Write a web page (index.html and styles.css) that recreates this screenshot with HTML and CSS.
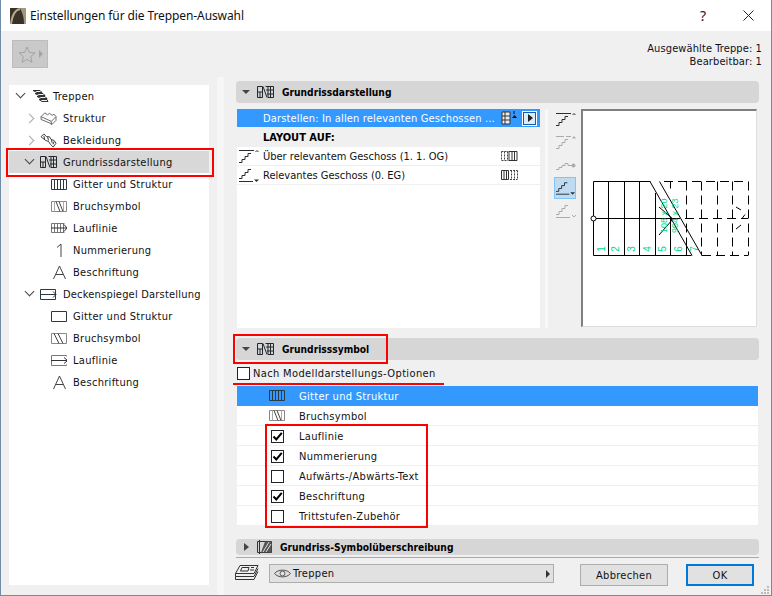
FILE: index.html
```html
<!DOCTYPE html>
<html lang="de">
<head>
<meta charset="utf-8">
<title>Einstellungen für die Treppen-Auswahl</title>
<link rel="stylesheet" href="styles.css">
</head>
<body>
<svg class="defs" width="0" height="0">
  <symbol id="i-plan" viewBox="0 0 17 12"><path d="M.5.500h5v11h-5zM.5 6h5M3 6v5.500M6 .5l4 11M8.500.500h8v11H11M11 .5v11M13.500.5v11M9 4h7.500M10 8h6.500" fill="none" stroke="#23282c" stroke-width="1"/></symbol>
  <symbol id="i-grid" viewBox="0 0 17 12"><path d="M.5 .5h15v10H.5zM3.500 .5v10M6.500 .5v10M9.500 .5v10M12.500 .5v10" fill="none" stroke="#2b3a42" stroke-width="1"/></symbol>
  <symbol id="i-break" viewBox="0 0 17 12"><path d="M.5 .5h15v10H.5z" fill="none" stroke="#888"/><path d="M3.500 .5v10M12.500 .5v10" stroke="#aaa"/><path d="M5 .5l4 10M8 .5l4 10" stroke="#444" fill="none"/></symbol>
  <symbol id="i-walk" viewBox="0 0 17 12"><path d="M.5 1.500h13M.5 10.500h13M.5 1.500v9M3.500 1.500v9M6.500 1.500v9M9.500 1.500v9M12.500 1.500v9" fill="none" stroke="#777"/><path d="M0 6h16M13 2.500l3 3.500-3 3.500" fill="none" stroke="#333"/></symbol>
  <symbol id="i-num" viewBox="0 0 17 14"><path d="M6 4.500l4-3.500v13" fill="none" stroke="#444"/></symbol>
  <symbol id="i-a" viewBox="0 0 17 14"><path d="M2.500 14L8.500 1l6 13M5 9.500h7" fill="none" stroke="#444"/></symbol>
  <symbol id="i-ceil" viewBox="0 0 18 12"><path d="M.5 .5h15v10H.5z" fill="none" stroke="#2b3a42"/><path d="M.5 5.500h15.500M13 2.500l3 3-3 3" fill="none" stroke="#2b3a42"/></symbol>
  <symbol id="i-rect" viewBox="0 0 17 12"><path d="M.5 .5h15v10H.5z" fill="none" stroke="#2b3a42"/></symbol>
  <symbol id="i-break2" viewBox="0 0 17 12"><path d="M.5 .5h15v10H.5z" fill="none" stroke="#888"/><path d="M3 .5l5 10M7 .5l5 10" stroke="#444" fill="none"/></symbol>
  <symbol id="i-walk2" viewBox="0 0 17 12"><path d="M15.500 1.500V.5H.5v10h15V9.500" fill="none" stroke="#777"/><path d="M0 5.500h16M13 2.500l3.500 3-3.500 3" fill="none" stroke="#333"/></symbol>
  <symbol id="s-top" viewBox="0 0 21 14"><path d="M1 1.500h15" stroke="currentColor" fill="none"/><path d="M17.500 3l1.500-1.500L20.500 3" stroke="currentColor" fill="none"/><path d="M1 13.500h3v-3h3v-3h3v-3h3" stroke="currentColor" fill="none"/></symbol>
  <symbol id="s-mid" viewBox="0 0 21 14"><path d="M1 1.500h8M11 1.500h5" stroke="currentColor" fill="none"/><path d="M17 3.500h4L19 1z" fill="currentColor"/><path d="M1 13.500h3v-3h3v-3h3v-3h3" stroke="currentColor" fill="none"/></symbol>
  <symbol id="s-dot" viewBox="0 0 21 14"><path d="M1 11.500h3v-2h3v-2h3v-2h3v2h5" stroke="currentColor" fill="none"/><circle cx="18.500" cy="7.500" r="2" fill="currentColor"/></symbol>
  <symbol id="s-cur" viewBox="0 0 21 14"><path d="M1 10.500h3v-3h3v-3h3v-3h3M1 13.500h14" stroke="currentColor" fill="none"/><path d="M16 11.500h5L18.500 14z" fill="currentColor"/></symbol>
  <symbol id="s-low" viewBox="0 0 21 14"><path d="M1 10.500h3v-3h3v-3h3v-3h3M1 13.500h14M17 11l2 2 2-2" stroke="currentColor" fill="none"/></symbol>
  <symbol id="i-check" viewBox="0 0 11 11"><path d="M1.500 5.500l2.800 3L9.800 1.800" fill="none" stroke="#000" stroke-width="2"/></symbol>
</svg>

<div class="window">
  <header class="titlebar">
    <svg class="app-icon" width="16" height="16" viewBox="0 0 16 16"><rect width="16" height="16" fill="#3a3226"/><path d="M10 0h6v16h-2c0-6-1-10-4-16z" fill="#a3967c"/><path d="M1 16C2 8 5 2 10 1" fill="none" stroke="#b5a88f" stroke-width="2"/></svg>
    <span class="title">Einstellungen für die Treppen-Auswahl</span>
    <span class="help">?</span>
    <svg class="close" width="11" height="11" viewBox="0 0 11 11"><path d="M.5.500l10 10M10.500.500l-10 10" stroke="#222" fill="none"/></svg>
  </header>

  <div class="toolbar">
    <div class="fav">
      <svg width="18" height="17" viewBox="0 0 18 17"><path d="M9 1l2.300 5.400 5.700.5-4.300 3.800 1.300 5.700L9 13.400l-5 3 1.300-5.700L1 6.900l5.700-.5z" fill="none" stroke="#a3a3a3"/></svg>
      <span class="fav-arrow"></span>
    </div>
    <div class="info">Ausgewählte Treppe: 1<br>Bearbeitbar: 1</div>
  </div>

  <div class="content">
    <nav class="tree">
      <div class="node l0"><span class="chev open"></span><svg class="ti" width="17" height="14" viewBox="0 0 17 14"><path d="M1 1.500h7l2 2H5zM3 4.500h8l2 2H7zM5 7.500h8l2 2H9zM7 10.500h8l1 2h-6z" fill="#f2f2f2" stroke="#333"/></svg><span>Treppen</span></div>
      <div class="node l1"><span class="chev"></span><svg class="ti wide" width="17" height="15" viewBox="0 0 18 16"><path d="M1 6l4-4 3 2 2-1.500 3 2 2-1 2 2.500v4l-4 4-12-5zM1 6l11 5 5-5M12 11v4" fill="#fafafa" stroke="#666" stroke-linejoin="round"/></svg><span>Struktur</span></div>
      <div class="node l1"><span class="chev"></span><svg class="ti wide" width="17" height="15" viewBox="0 0 18 16"><path d="M1 4l3-3 3 3 3 0 2 3 3 1 2 3-3 4-3-3-2-3-3-1z" fill="#fff" stroke="#333"/><path d="M4 3l1 4M8 4l1 4M12 7l1 4M15 9l-1 3" stroke="#333"/></svg><span>Bekleidung</span></div>
      <div class="node l1 sel"><span class="chev open"></span><svg class="ti wide" width="17" height="12"><use href="#i-plan"/></svg><span>Grundrissdarstellung</span></div>
      <div class="node l2"><svg class="ti" width="16" height="11" viewBox="0 0 16 11"><use href="#i-grid" width="17" height="12"/></svg><span>Gitter und Struktur</span></div>
      <div class="node l2"><svg class="ti" width="16" height="11" viewBox="0 0 16 11"><use href="#i-break" width="17" height="12"/></svg><span>Bruchsymbol</span></div>
      <div class="node l2"><svg class="ti" width="16" height="12" viewBox="0 0 16 12"><use href="#i-walk" width="17" height="12"/></svg><span>Lauflinie</span></div>
      <div class="node l2"><svg class="ti" width="16" height="14" viewBox="0 0 16 14"><use href="#i-num" width="17" height="14"/></svg><span>Nummerierung</span></div>
      <div class="node l2"><svg class="ti" width="16" height="14" viewBox="0 0 16 14"><use href="#i-a" width="17" height="14"/></svg><span>Beschriftung</span></div>
      <div class="node l1"><span class="chev open"></span><svg class="ti wide" width="17" height="11" viewBox="0 0 17 11"><use href="#i-ceil" width="18" height="12"/></svg><span class="tight">Deckenspiegel Darstellung</span></div>
      <div class="node l2"><svg class="ti" width="16" height="11" viewBox="0 0 16 11"><use href="#i-rect" width="17" height="12"/></svg><span>Gitter und Struktur</span></div>
      <div class="node l2"><svg class="ti" width="16" height="11" viewBox="0 0 16 11"><use href="#i-break2" width="17" height="12"/></svg><span>Bruchsymbol</span></div>
      <div class="node l2"><svg class="ti" width="16" height="11" viewBox="0 0 16 11"><use href="#i-walk2" width="17" height="12"/></svg><span>Lauflinie</span></div>
      <div class="node l2"><svg class="ti" width="16" height="14" viewBox="0 0 16 14"><use href="#i-a" width="17" height="14"/></svg><span>Beschriftung</span></div>
    </nav>

    <div class="splitter"></div>

    <main class="panel">
      <div class="section-head"><span class="tri-down"></span><svg width="17" height="12"><use href="#i-plan"/></svg><b>Grundrissdarstellung</b></div>
      <div class="top-row">
        <div class="list-top">
          <div class="lt-row active">
            <span class="lt-ico"></span>
            <span class="lt-text">Darstellen: In allen relevanten Geschossen ...</span>
            <svg class="lt-state" width="17" height="14" viewBox="0 0 17 14"><path d="M1 1h8v12H1z" fill="#eee" stroke="#333"/><path d="M1 5h8M1 9h8M4 1v12" stroke="#333"/><path d="M11 7h5l-2.500-3z" fill="#111"/><path d="M13 3V0" stroke="#111"/></svg>
            <span class="play"><i></i></span>
          </div>
          <div class="lt-row caption"><span class="lt-ico"></span><b class="lt-text">LAYOUT AUF:</b></div>
          <div class="lt-row">
            <svg class="lt-ico s" width="21" height="14"><use href="#s-top"/></svg>
            <span class="lt-text">Über relevantem Geschoss (1. 1. OG)</span>
            <svg class="lt-state" width="17" height="12" viewBox="0 0 17 12"><path d="M.5 1.500h7M.5 10.500h7M.5 1.500v9M3.500 1.500v9M6.500 1.500v9" fill="none" stroke="#444" stroke-dasharray="2 1"/><path d="M8 1.500h8v9H8zM11 1.500v9M13.500 1.500v9" fill="none" stroke="#333"/></svg>
          </div>
          <div class="lt-row">
            <svg class="lt-ico s" width="21" height="14"><use href="#s-cur"/></svg>
            <span class="lt-text">Relevantes Geschoss (0. EG)</span>
            <svg class="lt-state" width="17" height="12" viewBox="0 0 17 12"><path d="M.5 1.500h7v9h-7zM3 1.500v9M5.500 1.500v9" fill="none" stroke="#333"/><path d="M9 1.500h7.500M9 10.500h7.500M16.500 1.500v9M10.500 1.500v9M13.500 1.500v9" fill="none" stroke="#444" stroke-dasharray="2 1"/></svg>
          </div>
          <div class="lt-fill"></div>
        </div>
        <div class="band"></div>
        <div class="tools">
          <span class="tool"><svg width="21" height="14"><use href="#s-top"/></svg></span>
          <span class="tool off"><svg width="21" height="14"><use href="#s-mid"/></svg></span>
          <span class="tool off"><svg width="21" height="14"><use href="#s-dot"/></svg></span>
          <span class="tool on"><svg width="21" height="14"><use href="#s-cur"/></svg></span>
          <span class="tool off"><svg width="21" height="14"><use href="#s-low"/></svg></span>
        </div>
        <div class="preview">
          <svg width="176" height="218" viewBox="581 109 176 218">
            <g fill="none" stroke="#000" stroke-width="1">
              <path d="M593.500 181.500h57M593.500 255.500h98M593.500 181.500v74M608.500 181.500v74M624.500 181.500v74M639.500 181.500v74M655.500 193v62.500M670.500 218v37.500M686.500 245v10.500"/>
              <path d="M650 181.500l42 74M659.500 181.500l42.500 74"/>
              <path d="M596 218.500h75"/>
              <path d="M659 207l14 12M673 219l-14 16"/>
              <path d="M671 218.500h77M702 255.500h46M664 181.500h84M670.500 181.500v7M686.500 181.500v74M701.500 181.500v74M717.500 181.500v74M732.500 181.500v74M748.500 181.500v74" stroke-dasharray="9 5"/>
              <path d="M736 207l5 3M746 218.500h-4l3-4M736 229l5-4"/>
            </g>
            <circle cx="593.500" cy="218.500" r="2.500" fill="#fff" stroke="#000"/>
            <g class="stair-nums">
              <text transform="translate(604.500 249) rotate(-90)">1</text>
              <text transform="translate(619 249) rotate(-90)">2</text>
              <text transform="translate(635 249) rotate(-90)">3</text>
              <text transform="translate(650.500 249) rotate(-90)">4</text>
              <text transform="translate(666 249) rotate(-90)">5</text>
              <text transform="translate(681.500 249) rotate(-90)">6</text>
              <text transform="translate(698 249) rotate(-90)">7</text>
              <text class="dim" transform="translate(667 233) rotate(-90)">108 x 20</text>
              <text class="dim" transform="translate(678 233) rotate(-90)">904 x 23</text>
            </g>
          </svg>
        </div>
      </div>

      <div class="section-head second"><span class="tri-down"></span><svg width="17" height="12"><use href="#i-plan"/></svg><b>Grundrisssymbol</b></div>
      <label class="model-check"><span class="box"></span><span>Nach Modelldarstellungs-Optionen</span></label>
      <div class="sym-list">
        <div class="sym-row active"><span class="sym-cell"><svg width="17" height="12"><use href="#i-grid"/></svg></span><span>Gitter und Struktur</span></div>
        <div class="sym-row"><span class="sym-cell"><svg width="17" height="12"><use href="#i-break"/></svg></span><span>Bruchsymbol</span></div>
        <div class="sym-row"><span class="sym-cell"><span class="box"><svg width="11" height="11"><use href="#i-check"/></svg></span></span><span>Lauflinie</span></div>
        <div class="sym-row"><span class="sym-cell"><span class="box"><svg width="11" height="11"><use href="#i-check"/></svg></span></span><span>Nummerierung</span></div>
        <div class="sym-row"><span class="sym-cell"><span class="box"></span></span><span>Aufwärts-/Abwärts-Text</span></div>
        <div class="sym-row"><span class="sym-cell"><span class="box"><svg width="11" height="11"><use href="#i-check"/></svg></span></span><span>Beschriftung</span></div>
        <div class="sym-row"><span class="sym-cell"><span class="box"></span></span><span>Trittstufen-Zubehör</span></div>
      </div>

      <div class="section-head third"><span class="tri-right"></span><svg width="17" height="16" viewBox="0 0 17 16"><path d="M1.500 2.500h14v11h-14zM3.500 1v14" fill="none" stroke="#333"/><path d="M9 2.500h6.500v11H5z" fill="#555"/><path d="M7 13l6-10M10 13l5-8" stroke="#ddd"/></svg><b>Grundriss-Symbolüberschreibung</b></div>

      <footer class="footer">
        <svg class="stack" width="25" height="18" viewBox="0 0 25 18"><path d="M6 1.500h18l-4 8H1.500zM1.500 9.500v3h18.500l4-8M1.500 12.500v3h18.500l4-8" fill="#f0f0f0" stroke="#333"/><path d="M8 3.500h7l-1 3.500H6.500z" fill="none" stroke="#333"/><path d="M17 3.500l3 0M16 6h4" stroke="#333"/></svg>
        <div class="select">
          <svg width="17" height="11" viewBox="0 0 17 11"><path d="M.5 5.500C4 1 13 1 16.500 5.500 13 10 4 10 .5 5.500z" fill="none" stroke="#555"/><circle cx="8.500" cy="5.500" r="2.500" fill="none" stroke="#555"/></svg>
          <span>Treppen</span>
          <span class="select-arrow"></span>
        </div>
        <button class="btn cancel">Abbrechen</button>
        <button class="btn ok">OK</button>
      </footer>
    </main>
  </div>

  <div class="mark mark-tree"></div>
  <div class="mark mark-head"></div>
  <div class="mark mark-line"></div>
  <div class="mark mark-checks"></div>
  <svg class="grip" width="10" height="10" viewBox="0 0 10 10"><path d="M7 1h2v2H7zM4 4h2v2H4zM7 4h2v2H7zM1 7h2v2H1zM4 7h2v2H4zM7 7h2v2H7z" fill="#bbb"/></svg>
</div>
</body>
</html>
```

FILE: styles.css
```css
* { box-sizing: border-box; }
html, body { margin: 0; padding: 0; background: #f0f0f0; }
body {
  width: 772px; height: 596px; overflow: hidden;
  font-family: "DejaVu Sans Condensed", "DejaVu Sans", sans-serif;
  font-size: 11px; color: #000; letter-spacing: .3px;
}
b { letter-spacing: 0; }
.defs { position: absolute; }
.window {
  position: relative; width: 772px; height: 596px;
  background: #f0f0f0;
  border: 1px solid #6f8ca8; border-top: 0;
  display: flex; flex-direction: column;
}
.titlebar {
  height: 31px; background: #fff; flex: none;
  display: flex; align-items: center;
  padding-left: 9px; letter-spacing: 0;
}
.app-icon { margin-right: 4px; }
.title { font-family: "Noto Sans", sans-serif; font-size: 12px; color: #111; flex: 1; letter-spacing: -.1px; }
.help { font-family: "Noto Sans", sans-serif; font-size: 14px; margin-right: 37px; color: #222; }
.close { margin-right: 17px; }

.toolbar { height: 46px; flex: none; display: flex; justify-content: space-between; padding: 9px 9px 0 11px; }
.fav {
  width: 36px; height: 28px; background: #c9c9c9; border: 1px solid #bcbcbc;
  display: flex; align-items: center; padding-left: 5px; gap: 3px;
}
.fav-arrow { width: 0; height: 0; border-left: 4px solid #a3a3a3; border-top: 4px solid transparent; border-bottom: 4px solid transparent; }
.info { text-align: right; line-height: 13px; padding-top: 2px; color: #10101c; letter-spacing: .1px; }

.content { flex: 1; display: flex; min-height: 0; }
.tree { width: 200px; margin: 8px 0 10px 8px; background: #fff; flex: none; }
.node { height: 22px; display: flex; align-items: center; position: relative; color: #111; }
.node .chev { position: absolute; top: 8px; width: 7px; height: 7px; border-right: 1.500px solid #a8a8a8; border-top: 1.500px solid #a8a8a8; transform: rotate(45deg); }
.node .chev.open { border-color: #444; transform: rotate(135deg); top: 5px; }
.l0 { padding-left: 23px; }
.l0 .chev { left: 8px; }
.l0 .ti { margin-right: 4px; }
.l1 { padding-left: 31px; }
.l1 .chev { left: 17px; }
.l1 .ti { margin-right: 6px; }
.l2 { padding-left: 42px; }
.l2 .ti { margin-right: 6px; }
.sel { background: #d8d8d8; }
.tight { letter-spacing: .2px; }

.splitter { width: 7px; margin-left: 8px; background: #f6f6f6; flex: none; }
.panel { width: 523px; margin-left: 12px; padding-top: 4px; display: flex; flex-direction: column; flex: none; }

.section-head {
  height: 22px; background: #d6d6d6; border-radius: 4px;
  display: flex; align-items: center; padding-left: 6px; flex: none; color: #000;
}
.section-head b { margin-left: 8px; font-weight: 700; font-size: 10.200px; }
.section-head svg { margin-left: 7px; }
.tri-down { width: 0; height: 0; border-top: 4px solid #444; border-left: 4px solid transparent; border-right: 4px solid transparent; }
.tri-right { width: 0; height: 0; margin-left: 2px; border-left: 5px solid #444; border-top: 4px solid transparent; border-bottom: 4px solid transparent; }

.top-row { display: flex; height: 219px; margin-top: 6px; flex: none; padding-left: 1px; }
.list-top { width: 303px; display: flex; flex-direction: column; flex: none; letter-spacing: 0; }
.lt-row { height: 19px; display: flex; align-items: center; background: #fff; border-bottom: 1px solid #efefef; flex: none; color: #111; }
.lt-row.active { height: 18px; background: #3399ff; color: #fff; border: 0; margin-bottom: 1px; letter-spacing: .15px; }
.lt-row.caption { background: #f0f0f0; border: 0; color: #000; }
.lt-ico { width: 21px; margin: 0 4px 0 1px; flex: none; }
.lt-ico.s { color: #2b2f33; }
.lt-text { width: 238px; white-space: nowrap; flex: none; }
.lt-state { flex: none; }
.play {
  width: 15px; height: 15px; margin-left: 4px; background: #dcecfb; border: 1px solid #fff; outline: 1px solid #0d5fb0; outline-offset: -2px;
  display: flex; align-items: center; justify-content: center;
}
.play i { width: 0; height: 0; margin-left: 1px; border-left: 5px solid #222; border-top: 4px solid transparent; border-bottom: 4px solid transparent; }
.lt-fill { flex: 1; background: #fff; }
.band { width: 3px; margin-left: 5px; background: #f8f8f8; flex: none; }
.tools { width: 24px; margin: -1px 0 0 5px; display: flex; flex-direction: column; flex: none; align-items: center; gap: 1px; }
.tool { height: 22px; display: flex; align-items: center; justify-content: center; color: #2b2f33; flex: none; width: 22px; }
.tool.off { color: #ababab; }
.tool.on { background: #bfdbf2; border: 1px solid #86c3f5; }
.preview { width: 176px; height: 218px; margin-left: 4px; flex: none; background: #fff; position: relative; border-top: 2px solid #808080; border-left: 2px solid #808080; border-right: 1px solid #ddd; border-bottom: 1px solid #ddd; overflow: hidden; }
.preview svg { display: block; margin: -2px 0 0 -2px; }
.stair-nums text { font-family: "Liberation Sans", sans-serif; font-size: 10px; fill: #00d890; letter-spacing: 0; text-anchor: middle; }
.stair-nums text.dim { font-size: 9px; text-anchor: start; }

.section-head.second { margin-top: 10px; }
.model-check { height: 26px; display: flex; align-items: center; padding-left: 1px; gap: 3px; flex: none; color: #111; letter-spacing: .36px; }
.box { width: 13px; height: 13px; border: 1px solid #222; background: #fff; display: flex; align-items: center; justify-content: center; flex: none; }
.sym-list { display: flex; flex-direction: column; margin-left: 1px; width: 521px; flex: none; }
.sym-row { height: 20px; background: #fff; border-bottom: 1px solid #efefef; display: flex; align-items: center; color: #111; flex: none; padding-top: 1px; }
.sym-row.active { background: #3399ff; color: #fff; border: 0; padding-top: 0; }
.sym-cell { width: 62px; padding-left: 32px; display: flex; flex: none; align-items: center; }
.sym-cell .box { margin-left: 2px; }

.section-head.third { margin-top: 13px; height: 16px; }
.section-head.third b { margin-left: 7px; }
.footer { margin-top: 2px; border-top: 1px solid #a8a8a8; display: flex; align-items: flex-start; padding-top: 6px; flex: none; }
.stack { margin: 0 10px 0 -2px; flex: none; }
.select { width: 285px; height: 19px; background: #e1e1e1; border: 1px solid #adadad; display: flex; align-items: center; padding-left: 4px; gap: 2px; flex: none; color: #111; }
.select-arrow { margin-left: auto; margin-right: 3px; width: 0; height: 0; border-left: 4px solid #333; border-top: 4px solid transparent; border-bottom: 4px solid transparent; }
.btn { height: 22px; background: #e1e1e1; border: 1px solid #adadad; font: inherit; color: #111; padding: 0; letter-spacing: .3px; }
.cancel { width: 88px; margin-left: 26px; }
.ok { width: 68px; margin-left: 18px; border: 2px solid #0078d7; }

.mark { position: absolute; border: 2px solid #f00; pointer-events: none; }
.mark-tree { left: 5px; top: 148px; width: 208px; height: 29px; }
.mark-head { left: 232px; top: 334px; width: 155px; height: 30px; }
.mark-line { left: 232px; top: 383px; width: 211px; height: 2px; border-width: 1px; }
.mark-checks { left: 264px; top: 424px; width: 163px; height: 104px; }
.grip { position: absolute; right: 1px; bottom: 0; }
```
